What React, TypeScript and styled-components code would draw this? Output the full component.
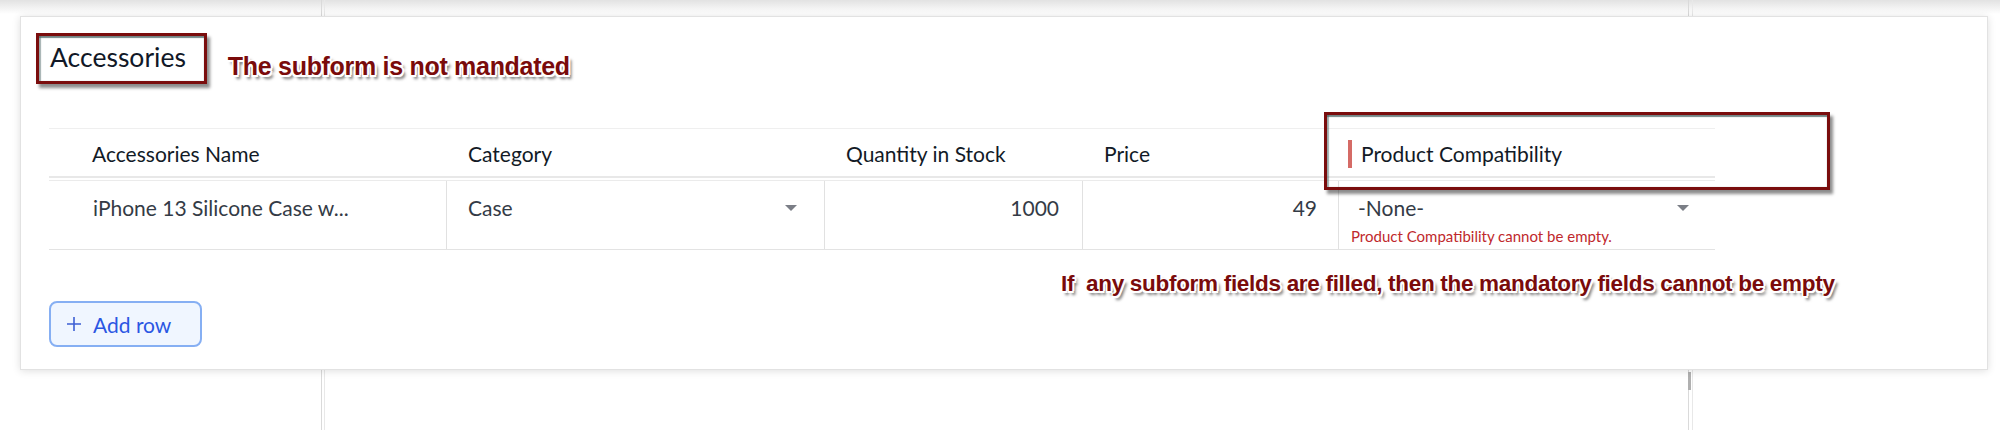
import React from 'react';
import styled, { createGlobalStyle } from 'styled-components';

const GlobalStyle = createGlobalStyle`
  html, body {
    margin: 0;
    padding: 0;
  }

  body {
    font-family: Lato, 'Noto Sans', sans-serif;
    background: #fff;
  }
`;

type Column = {
  key: string;
  label: string;
  width: number;
  required?: boolean;
};

const columns: Column[] = [
  { key: 'name', label: 'Accessories Name', width: 397 },
  { key: 'category', label: 'Category', width: 378 },
  { key: 'stock', label: 'Quantity in Stock', width: 258 },
  { key: 'price', label: 'Price', width: 256 },
  { key: 'compat', label: 'Product Compatibility', width: 377, required: true },
];

const gridColumns = columns.map((c) => `${c.width}px`).join(' ');

const App = () => {
  return (
    <>
      <GlobalStyle />
      <Page>
        <Card>
          <TitleRow>
            <TitleBox>Accessories</TitleBox>
            <Note $size={25}>The subform is not mandated</Note>
          </TitleRow>

          <Table>
            <HeaderRow>
              {columns.map((col) => (
                <HeaderCell key={col.key} $first={col.key === 'name'}>
                  {col.required && <RequiredBar />}
                  {col.label}
                </HeaderCell>
              ))}
            </HeaderRow>

            <BodyRow>
              <BodyCell $first>iPhone 13 Silicone Case w...</BodyCell>
              <BodyCell>
                <SelectLine $right={27}>
                  <span>Case</span>
                  <Caret />
                </SelectLine>
              </BodyCell>
              <BodyCell $align='right' $right={23}>
                1000
              </BodyCell>
              <BodyCell $align='right' $right={21}>
                49
              </BodyCell>
              <BodyCell $left={12}>
                <SelectLine $right={26}>
                  <NoneValue>-None-</NoneValue>
                  <Caret />
                </SelectLine>
                <ErrorText>Product Compatibility cannot be empty.</ErrorText>
              </BodyCell>
            </BodyRow>

            <MarkBox />
          </Table>

          <FooterNote $size={22.5}>
            If&nbsp; any subform fields are filled, then the mandatory fields cannot be empty
          </FooterNote>

          <AddRowButton>
            <svg width='16' height='16' viewBox='0 0 16 16' fill='none'>
              <path d='M8 1v14M1 8h14' stroke='#3d5fd4' strokeWidth='1.6' />
            </svg>
            Add row
          </AddRowButton>
        </Card>
      </Page>
    </>
  );
};

export default App;

const Page = styled.div`
  width: 2000px;
  height: 430px;
  overflow: hidden;
  box-sizing: border-box;
  padding: 16px 12px 0 20px;

  background:
    linear-gradient(#b0b0b0, #b0b0b0) 1688px 372px / 3px 18px no-repeat,
    linear-gradient(#dadada, #dadada) 321px 0 / 1px 100% no-repeat,
    linear-gradient(#e8e8e8, #e8e8e8) 324px 0 / 1px 100% no-repeat,
    linear-gradient(#dadada, #dadada) 1688px 0 / 1px 100% no-repeat,
    linear-gradient(#e8e8e8, #e8e8e8) 1692px 0 / 1px 100% no-repeat,
    linear-gradient(to bottom, #e2e2e2, #ffffff 14px) 0 0 / 100% 14px no-repeat,
    #fff;
`;

const Card = styled.section`
  display: flex;
  flex-direction: column;
  align-items: flex-start;

  width: 1968px;
  height: 354px;
  box-sizing: border-box;
  padding: 16px 0 0 28px;

  background: #fff;
  border: 1px solid #e2e2e2;
  box-shadow: 0 1px 8px rgba(0, 0, 0, 0.13);
`;

const TitleRow = styled.div`
  display: flex;
  align-items: flex-start;
  gap: 21px;

  margin-left: -13px;
`;

const TitleBox = styled.h2`
  margin: 0;
  padding: 5px 18px 8px 11px;

  border: 3px solid #7a0d0d;
  box-shadow:
    inset 0 2px 1px rgba(70, 95, 95, 0.75),
    inset 2px 0 1px rgba(70, 95, 95, 0.5),
    3px 4px 3px rgba(0, 0, 0, 0.45);

  font-family: Lato, sans-serif;
  font-size: 26.5px;
  font-weight: 400;
  line-height: 32px;
  color: #111827;
`;

const Note = styled.span<{ $size: number }>`
  margin-top: 18px;

  font-family: 'Liberation Sans', Arial, sans-serif;
  font-size: ${(p) => p.$size}px;
  font-weight: 700;
  line-height: 30px;
  letter-spacing: -0.3px;
  color: #7a0b0b;
  white-space: nowrap;

  text-shadow:
    -1.5px -1.5px 0 #fff,
    1.5px -1.5px 0 #fff,
    -1.5px 1.5px 0 #fff,
    1.5px 1.5px 0 #fff,
    0 2px 0 #fff,
    2px 0 0 #fff,
    3px 4px 3px rgba(0, 0, 0, 0.55);
`;

const FooterNote = styled(Note)`
  margin-top: 23px;
  margin-left: 1012px;

  line-height: 22px;
`;

const Table = styled.div`
  position: relative;

  width: 1666px;
  margin-top: 44px;
`;

const HeaderRow = styled.div`
  display: grid;
  grid-template-columns: ${gridColumns};

  height: 50px;
  box-sizing: border-box;

  border-top: 1px solid #efefef;
  border-bottom: 2px solid #e8e8e8;
`;

const HeaderCell = styled.div<{ $first?: boolean }>`
  display: flex;
  align-items: center;

  padding: 2px 0 0 ${(p) => (p.$first ? 43 : 22)}px;

  font-size: 21px;
  line-height: 45px;
  color: #121a26;
  white-space: nowrap;
`;

const RequiredBar = styled.span`
  width: 4px;
  height: 28px;
  margin: 0 9px 0 -12px;

  background: #d56b66;
`;

const BodyRow = styled.div`
  display: grid;
  grid-template-columns: ${gridColumns};

  height: 70px;
  box-sizing: border-box;
  margin-top: 2px;

  border-top: 1px solid #ebebeb;
  border-bottom: 1px solid #e3e3e3;
`;

const BodyCell = styled.div<{
  $first?: boolean;
  $align?: 'left' | 'right';
  $left?: number;
  $right?: number;
}>`
  box-sizing: border-box;
  padding: 14px ${(p) => p.$right ?? 0}px 0
    ${(p) => p.$left ?? (p.$first ? 44 : 21)}px;

  border-left: ${(p) => (p.$first ? 'none' : '1px solid #e1e1e1')};

  font-size: 21px;
  line-height: 26px;
  text-align: ${(p) => p.$align ?? 'left'};
  color: #343b46;
  white-space: nowrap;
`;

const SelectLine = styled.div<{ $right: number }>`
  display: flex;
  justify-content: space-between;
  align-items: center;

  margin-right: ${(p) => p.$right}px;
`;

const NoneValue = styled.span`
  padding-left: 7px;
`;

const Caret = styled.span`
  width: 0;
  height: 0;

  border-left: 6px solid transparent;
  border-right: 6px solid transparent;
  border-top: 6px solid #7b7e86;
`;

const ErrorText = styled.div`
  margin-top: 6px;

  font-size: 15px;
  line-height: 18px;
  color: #c0282c;
`;

const MarkBox = styled.div`
  position: absolute;
  left: 1275px;
  top: -16px;

  width: 506px;
  height: 78px;
  box-sizing: border-box;

  border: 3px solid #7a0d0d;
  box-shadow:
    inset 0 2px 1px rgba(70, 95, 95, 0.75),
    inset 2px 0 1px rgba(70, 95, 95, 0.5),
    3px 4px 3px rgba(0, 0, 0, 0.45);
  pointer-events: none;
`;

const AddRowButton = styled.button`
  display: flex;
  align-items: center;
  gap: 11px;

  width: 153px;
  height: 46px;
  box-sizing: border-box;
  margin-top: 6px;
  padding: 0 0 0 15px;

  background: #f0f6ff;
  border: 2px solid #86aff3;
  border-radius: 8px;

  font-family: Lato, sans-serif;
  font-size: 21px;
  color: #2b56e3;

  cursor: pointer;
`;
